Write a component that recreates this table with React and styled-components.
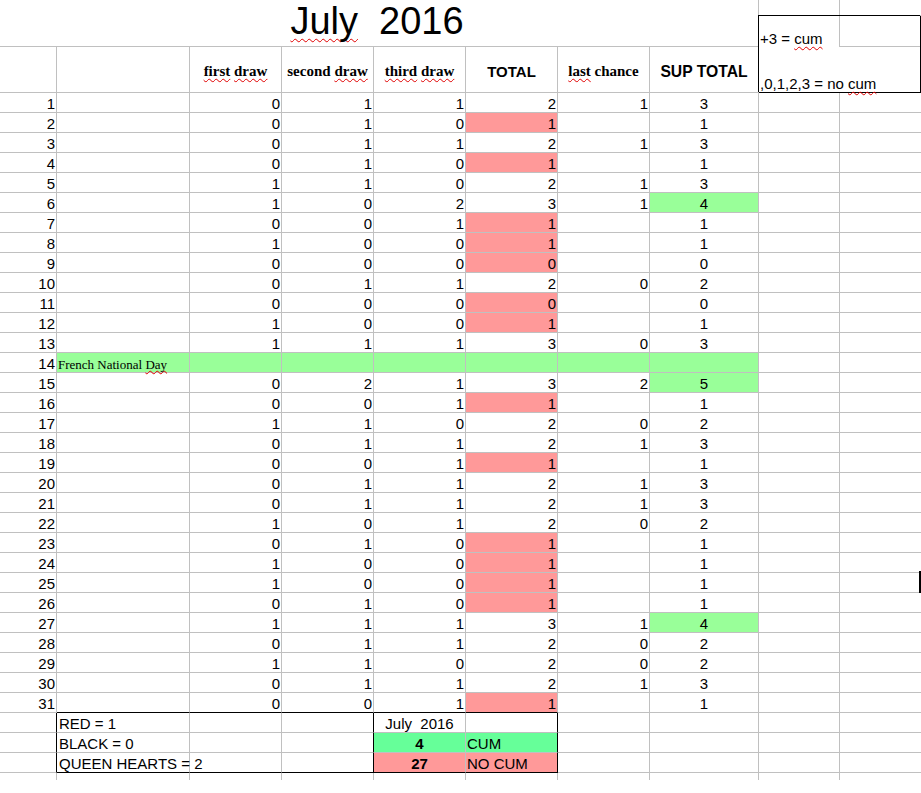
import React from 'react';
import styled, { createGlobalStyle } from 'styled-components';

const GRID = '#c0c0c0';
const PINK = '#ff9999';
const GREEN = '#99ff99';
const LEGEND_GREEN = '#66ff99';

const GlobalStyle = createGlobalStyle`
  body {
    margin: 0;
    background: #fff;
    font-family: "Liberation Sans", Arial, sans-serif;
  }
`;

const Page = styled.div`
  position: relative;
  width: 921px;
  height: 793px;
  overflow: hidden;
`;

const Sheet = styled.div`
  display: grid;
  grid-template-columns: 57px 133px 92px 92px 92px 92px 92px 109px 81px 81px;
  grid-template-rows: 16px 31px 46px repeat(34, 20px) 7px;
  color: #000;
`;

const line = (c) => (c === 'none' ? 'none' : `1px solid ${c || GRID}`);

const Cell = styled.div`
  box-sizing: border-box;
  border-right: ${(p) => line(p.$r)};
  border-bottom: ${(p) => line(p.$b)};
  background: ${(p) => p.$fill || 'transparent'};
  display: flex;
  align-items: flex-end;
  justify-content: ${(p) => (p.$align === 'center' ? 'center' : p.$align === 'left' ? 'flex-start' : 'flex-end')};
  padding: 0 1px;
  font-family: "Liberation Sans", Arial, sans-serif;
  font-size: 15px;
  line-height: 17px;
  font-weight: ${(p) => (p.$bold ? 700 : 400)};
  white-space: pre;
  min-width: 0;
`;

const TitleCell = styled.div`
  grid-column: 1 / span 8;
  grid-row: 1 / span 2;
  box-sizing: border-box;
  border-right: 1px solid ${GRID};
  border-bottom: 1px solid ${GRID};
  display: flex;
  justify-content: center;
  align-items: flex-start;
  padding: 2px 4px 0 0;
  font-family: "Liberation Sans", Arial, sans-serif;
  font-size: 38px;
  line-height: 38px;
  white-space: pre;
`;

const HeadCell = styled(Cell)`
  align-items: center;
  justify-content: center;
  padding-top: 3px;
  font-weight: 700;
  font-size: ${(p) => p.$size || 15}px;
  font-family: ${(p) => (p.$serif ? '"Liberation Serif", "Times New Roman", serif' : '"Liberation Sans", Arial, sans-serif')};
`;

const NoteBox = styled.div`
  grid-column: 9 / span 2;
  grid-row: 2 / span 2;
  position: relative;
  z-index: 1;
  box-sizing: border-box;
  border-right: 1px solid #000;
  border-bottom: 1px solid #000;
  box-shadow: -1px -1px 0 0 #000;
  background: #fff;
  display: grid;
  grid-template-columns: 81px 1fr;
  grid-template-rows: 31px 1fr;
  font-size: 15px;
  line-height: 17px;
`;

const NoteCell = styled.div`
  box-sizing: border-box;
  display: flex;
  align-items: flex-end;
  padding-left: 1px;
  white-space: pre;
  border-right: ${(p) => (p.$vline ? `1px solid ${GRID}` : 'none')};
  border-bottom: ${(p) => (p.$hline ? `1px solid ${GRID}` : 'none')};
  grid-column: ${(p) => (p.$wide ? '1 / span 2' : 'auto')};
`;

const Spell = styled.span`
  text-decoration: underline wavy #e00000;
  text-decoration-thickness: 1px;
  text-underline-offset: ${(p) => p.$offset || 2}px;
  text-decoration-skip-ink: none;
`;

const NoteText = styled.span`
  font-family: "Liberation Serif", "Times New Roman", serif;
  font-size: 13px;
  line-height: 15px;
`;

const Cursor = styled.div`
  position: absolute;
  left: 919px;
  top: 571px;
  width: 2px;
  height: 22px;
  background: #000;
`;

// [first, second, third, total, last chance, sup total, total pink?, sup green?]
const rows = [
  [0, 1, 1, 2, 1, 3],
  [0, 1, 0, 1, '', 1, 1],
  [0, 1, 1, 2, 1, 3],
  [0, 1, 0, 1, '', 1, 1],
  [1, 1, 0, 2, 1, 3],
  [1, 0, 2, 3, 1, 4, 0, 1],
  [0, 0, 1, 1, '', 1, 1],
  [1, 0, 0, 1, '', 1, 1],
  [0, 0, 0, 0, '', 0, 1],
  [0, 1, 1, 2, 0, 2],
  [0, 0, 0, 0, '', 0, 1],
  [1, 0, 0, 1, '', 1, 1],
  [1, 1, 1, 3, 0, 3],
  null,
  [0, 2, 1, 3, 2, 5, 0, 1],
  [0, 0, 1, 1, '', 1, 1],
  [1, 1, 0, 2, 0, 2],
  [0, 1, 1, 2, 1, 3],
  [0, 0, 1, 1, '', 1, 1],
  [0, 1, 1, 2, 1, 3],
  [0, 1, 1, 2, 1, 3],
  [1, 0, 1, 2, 0, 2],
  [0, 1, 0, 1, '', 1, 1],
  [1, 0, 0, 1, '', 1, 1],
  [1, 0, 0, 1, '', 1, 1],
  [0, 1, 0, 1, '', 1, 1],
  [1, 1, 1, 3, 1, 4, 0, 1],
  [0, 1, 1, 2, 0, 2],
  [1, 1, 0, 2, 0, 2],
  [0, 1, 1, 2, 1, 3],
  [0, 0, 1, 1, '', 1, 1],
];

const DataRow = ({ n, r }) => {
  const last = n === 31;
  const b = last ? '#000' : undefined;
  if (!r) {
    return (
      <>
        <Cell>{n}</Cell>
        <Cell $fill={GREEN} $align="left">
          <NoteText>French National <Spell $offset={1}>Day</Spell></NoteText>
        </Cell>
        {[0, 1, 2, 3, 4, 5].map((i) => <Cell key={i} $fill={GREEN} />)}
        <Cell />
        <Cell $r="none" />
      </>
    );
  }
  const [a, s, t, total, lc, sup, pink, green] = r;
  return (
    <>
      <Cell>{n}</Cell>
      <Cell $b={b} />
      <Cell $b={b}>{a}</Cell>
      <Cell $b={b}>{s}</Cell>
      <Cell $b={b}>{t}</Cell>
      <Cell $b={b} $fill={pink ? PINK : undefined}>{total}</Cell>
      <Cell>{lc}</Cell>
      <Cell $align="center" $fill={green ? GREEN : undefined}>{sup}</Cell>
      <Cell />
      <Cell $r="none" />
    </>
  );
};

const legend = [
  { label: 'RED = 1', value: 'July  2016', tag: '', fill: undefined, bold: false },
  { label: 'BLACK = 0', value: '4', tag: 'CUM', fill: LEGEND_GREEN, bold: true },
  { label: 'QUEEN HEARTS = 2', value: '27', tag: 'NO CUM', fill: PINK, bold: true },
];

const LegendRow = ({ item, last }) => {
  const b = last ? '#000' : undefined;
  return (
    <>
      <Cell $r="#000" />
      <Cell $b={b} $align="left" style={{ paddingLeft: 2 }}>{item.label}</Cell>
      <Cell $b={b} />
      <Cell $b={b} $r="#000" />
      <Cell $b={b} $align="center" $fill={item.fill} $bold={item.bold}>
        {item.value}
      </Cell>
      <Cell $b={b} $r="#000" $align="left" $fill={item.fill}>{item.tag}</Cell>
      <Cell />
      <Cell />
      <Cell />
      <Cell $r="none" />
    </>
  );
};

const App = () => (
  <Page>
    <GlobalStyle />
    <Sheet>
      <TitleCell>
        <span>
          <Spell $offset={4}>July</Spell>{'  2016'}
        </span>
      </TitleCell>
      <Cell />
      <Cell $r="none" />
      <NoteBox>
        <NoteCell $vline>
          <span>
            +3 = <Spell>cum</Spell>
          </span>
        </NoteCell>
        <NoteCell $hline />
        <NoteCell $wide>
          <span>
            ,0,1,2,3 = no <Spell>cum</Spell>
          </span>
        </NoteCell>
      </NoteBox>

      <Cell />
      <Cell />
      <HeadCell $serif>
        <span>
          <Spell>first</Spell> <Spell>draw</Spell>
        </span>
      </HeadCell>
      <HeadCell $serif>
        <span>
          second <Spell>draw</Spell>
        </span>
      </HeadCell>
      <HeadCell $serif>
        <span>
          <Spell>third</Spell> <Spell>draw</Spell>
        </span>
      </HeadCell>
      <HeadCell>TOTAL</HeadCell>
      <HeadCell $serif>
        <span>
          <Spell>last</Spell> chance
        </span>
      </HeadCell>
      <HeadCell $size={15.7}>SUP TOTAL</HeadCell>

      {rows.map((r, i) => (
        <DataRow key={i} n={i + 1} r={r} />
      ))}

      {legend.map((item, i) => (
        <LegendRow key={i} item={item} last={i === legend.length - 1} />
      ))}

      {Array.from({ length: 10 }).map((_, i) => (
        <Cell key={i} $b="none" $r={i === 9 ? 'none' : undefined} />
      ))}
    </Sheet>
    <Cursor />
  </Page>
);

export default App;
